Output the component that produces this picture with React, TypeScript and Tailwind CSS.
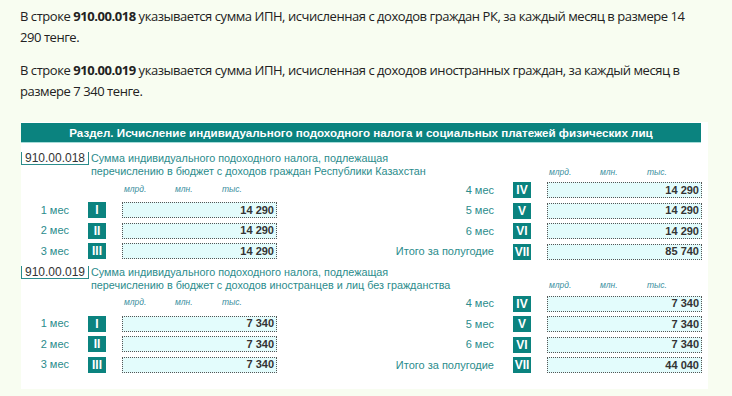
import type { ReactNode } from 'react'

const teal = 'bg-[#0b837f]'

type Row = { label: string; badge: string; value: string }

type Section = {
  code: string
  desc: [string, string]
  left: Row[]
  right: Row[]
}

const sections: Section[] = [
  {
    code: '910.00.018',
    desc: [
      'Сумма индивидуального подоходного налога, подлежащая',
      'перечислению в бюджет с доходов граждан Республики Казахстан',
    ],
    left: [
      { label: '1 мес', badge: 'I', value: '14 290' },
      { label: '2 мес', badge: 'II', value: '14 290' },
      { label: '3 мес', badge: 'III', value: '14 290' },
    ],
    right: [
      { label: '4 мес', badge: 'IV', value: '14 290' },
      { label: '5 мес', badge: 'V', value: '14 290' },
      { label: '6 мес', badge: 'VI', value: '14 290' },
      { label: 'Итого за полугодие', badge: 'VII', value: '85 740' },
    ],
  },
  {
    code: '910.00.019',
    desc: [
      'Сумма индивидуального подоходного налога, подлежащая',
      'перечислению в бюджет с доходов иностранцев и лиц без гражданства',
    ],
    left: [
      { label: '1 мес', badge: 'I', value: '7 340' },
      { label: '2 мес', badge: 'II', value: '7 340' },
      { label: '3 мес', badge: 'III', value: '7 340' },
    ],
    right: [
      { label: '4 мес', badge: 'IV', value: '7 340' },
      { label: '5 мес', badge: 'V', value: '7 340' },
      { label: '6 мес', badge: 'VI', value: '7 340' },
      { label: 'Итого за полугодие', badge: 'VII', value: '44 040' },
    ],
  },
]

function Units({ labelWidth }: { labelWidth: string }) {
  return (
    <div className="flex h-[12px] items-center text-[8.5px] italic leading-none text-[#3b8fa0]">
      <span className={`${labelWidth} shrink-0`} />
      <span className="w-[53px] shrink-0" />
      <span className="w-[53px] shrink-0 pl-[2px]">млрд.</span>
      <span className="w-[47px] shrink-0">млн.</span>
      <span>тыс.</span>
    </div>
  )
}

function FieldRow({ row, labelWidth }: { row: Row; labelWidth: string }) {
  return (
    <div className="flex h-[16px] items-center">
      <span className={`${labelWidth} shrink-0 text-right text-[11px] text-[#2b8c8c]`}>
        {row.label}
      </span>
      <span
        className={`ml-[19px] flex h-[16px] w-[18px] shrink-0 items-center justify-center ${teal} text-[12px] font-bold text-white`}
      >
        {row.badge}
      </span>
      <span className="ml-[16px] flex h-[16px] w-[155px] shrink-0 items-center justify-end border border-dotted border-[#555] bg-[#e3fcfc] pr-[2px] text-[11px] font-bold text-[#333]">
        {row.value}
      </span>
    </div>
  )
}

function Rows({ children }: { children: ReactNode }) {
  return <div className="flex flex-col gap-[4.5px]">{children}</div>
}

function FormSection({ s, className }: { s: Section; className?: string }) {
  return (
    <div className={`flex ${className ?? ''}`}>
      <div className="w-[279px] shrink-0">
        <div className="flex h-[26px] items-start">
          <span className="flex h-[13px] w-[68px] shrink-0 items-center justify-center border-x border-b border-[#2b8c8c] text-[12px] leading-none text-[#333]">
            {s.code}
          </span>
          <div className="ml-[2px] whitespace-nowrap text-[10.8px] leading-[13px] text-[#2b8c8c]">
            <div>{s.desc[0]}</div>
            <div>{s.desc[1]}</div>
          </div>
        </div>
        <div className="mt-[5px]">
          <Units labelWidth="w-[48px]" />
        </div>
        <div className="mt-[7px]">
          <Rows>
            {s.left.map((r) => (
              <FieldRow key={r.badge} row={r} labelWidth="w-[48px]" />
            ))}
          </Rows>
        </div>
      </div>
      <div className="pt-[14px]">
        <Units labelWidth="w-[194px]" />
        <div className="mt-[4px]">
          <Rows>
            {s.right.map((r) => (
              <FieldRow key={r.badge} row={r} labelWidth="w-[194px]" />
            ))}
          </Rows>
        </div>
      </div>
    </div>
  )
}

export default function App() {
  return (
    <div className="min-h-[396px] bg-[#f8fdf1] px-[20px] pt-[6px] font-['Open_Sans',sans-serif] text-[13px] leading-[21px] tracking-[-0.45px] text-[#222]">
      <div className="w-[688px]">
        <p>
          В строке <b>910.00.018</b> указывается сумма ИПН, исчисленная с доходов граждан РК, за
          каждый месяц в размере 14 290 тенге.
        </p>
        <p className="mt-[12px]">
          В строке <b>910.00.019</b> указывается сумма ИПН, исчисленная с доходов иностранных
          граждан, за каждый месяц в размере 7 340 тенге.
        </p>
      </div>
      <div className="mt-[20px] ml-[1px] w-[687px] bg-white pt-[1px] pb-[16px] font-['Liberation_Sans',Arial,sans-serif] leading-normal tracking-normal">
        <div
          className={`flex h-[20px] w-[680px] items-center justify-center border-b border-[#a6dcd8] ${teal} text-[11.6px] font-bold text-white`}
        >
          Раздел. Исчисление индивидуального подоходного налога и социальных платежей физических
          лиц
        </div>
        <FormSection s={sections[0]} className="mt-[9px]" />
        <FormSection s={sections[1]} className="mt-[6px]" />
      </div>
    </div>
  )
}
